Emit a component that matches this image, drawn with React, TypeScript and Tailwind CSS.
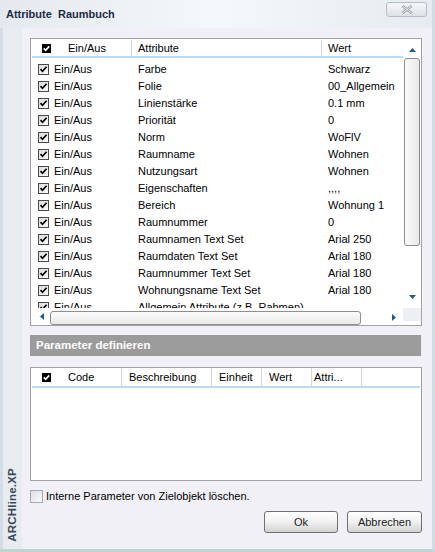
import { ReactNode } from 'react'

const rows = [
  ['Farbe', 'Schwarz'],
  ['Folie', '00_Allgemein'],
  ['Linienstärke', '0.1 mm'],
  ['Priorität', '0'],
  ['Norm', 'WoFlV'],
  ['Raumname', 'Wohnen'],
  ['Nutzungsart', 'Wohnen'],
  ['Eigenschaften', ',,,,'],
  ['Bereich', 'Wohnung 1'],
  ['Raumnummer', '0'],
  ['Raumnamen Text Set', 'Arial 250'],
  ['Raumdaten Text Set', 'Arial 180'],
  ['Raumnummer Text Set', 'Arial 180'],
  ['Wohnungsname Text Set', 'Arial 180'],
  ['Allgemein Attribute (z.B. Rahmen)', ''],
]

const RowCheck = () => (
  <svg width="11" height="11" viewBox="0 0 11 11" className="shrink-0">
    <defs>
      <linearGradient id="cb" x1="0" y1="0" x2="1" y2="1">
        <stop offset="0" stopColor="#d9d9d9" />
        <stop offset="1" stopColor="#ffffff" />
      </linearGradient>
    </defs>
    <rect x="0.5" y="0.5" width="10" height="10" fill="url(#cb)" stroke="#4a4a4a" />
    <path d="M2.5 5.2 L4.5 7.3 L8.6 2.8" fill="none" stroke="#000" strokeWidth="1.7" />
  </svg>
)

const HeadCheck = () => (
  <svg width="9" height="9" viewBox="0 0 9 9" className="shrink-0">
    <rect x="0" y="0" width="9" height="9" fill="#000" />
    <path d="M1.8 4.4 L3.7 6.4 L7.2 2.4" fill="none" stroke="#fff" strokeWidth="1.6" />
  </svg>
)

const Tri = ({ dir }: { dir: 'up' | 'down' | 'left' | 'right' }) => {
  const d = {
    up: 'M0 4 L3.5 0 L7 4 Z',
    down: 'M0 0 L7 0 L3.5 4 Z',
    left: 'M4 0 L4 7 L0 3.5 Z',
    right: 'M0 0 L4 3.5 L0 7 Z',
  }[dir]
  const vert = dir === 'up' || dir === 'down'
  return (
    <svg width={vert ? 7 : 4} height={vert ? 4 : 7} viewBox={vert ? '0 0 7 4' : '0 0 4 7'}>
      <path d={d} fill="#1f5a8e" />
    </svg>
  )
}

const HeadCell = ({ w, pl, children, last }: { w: string; pl: string; children?: ReactNode; last?: boolean }) => (
  <div className={`${w} ${pl} h-full flex items-center gap-[17px] ${last ? '' : 'border-r border-[#d6d6d6]'}`}>
    {children}
  </div>
)

export default function App() {
  return (
    <div className="w-[435px] h-[552px] flex flex-col bg-[#f0f0f6] font-['Liberation_Sans',Arial,sans-serif] text-[11px] text-black overflow-hidden border-r-[3px] border-b-[3px] border-r-[#d3dbe3] border-b-[#bcd5d1]">
      {/* Title bar */}
      <div className="h-[28px] shrink-0 flex items-center justify-between pl-[6px] pr-[5px] bg-gradient-to-r from-[#e3e9ee] via-[#f5f8fa] to-[#e5ebef]">
        <span className="font-bold text-[#1d2c45] whitespace-pre">Attribute  Raumbuch</span>
        <div className="w-[41px] h-[15px] mb-[9px] rounded-[3px] border border-[#b7bcc2] bg-gradient-to-b from-[#f6f7f8] to-[#dde1e5] flex items-center justify-center">
          <svg width="12" height="9" viewBox="0 0 12 9">
            <path d="M1.5 1 L10.5 8 M10.5 1 L1.5 8" stroke="#9aa0a6" strokeWidth="2.6" />
            <path d="M1.5 1 L10.5 8 M10.5 1 L1.5 8" stroke="#eef0f2" strokeWidth="1" />
          </svg>
        </div>
      </div>

      <div className="flex flex-1 min-h-0">
        {/* left brand strip */}
        <div className="w-[22px] shrink-0 border-l-[3px] border-[#d2dde7] bg-[#e8ecf1] flex flex-col justify-end items-center pb-[7px]">
          <span className="[writing-mode:vertical-rl] rotate-180 font-bold text-[11.5px] text-[#3b4a5a] tracking-[0.2px]">
            ARCHline.XP
          </span>
        </div>

        <div className="flex-1 flex flex-col pl-[8px] pr-[10px] pt-[10px]">
          {/* Attribute list */}
          <div className="h-[288px] border border-[#a3a3a3] bg-white flex flex-col">
            <div className="flex flex-1 min-h-0">
              <div className="w-[372px] flex flex-col">
                <div className="h-[19px] shrink-0 flex items-stretch pl-[1px] pt-[1px]">
                  <div className="flex w-full border-b-2 border-[#bcd9ef]">
                    <HeadCell w="w-[100px]" pl="pl-[10px]">
                      <HeadCheck />
                      <span>Ein/Aus</span>
                    </HeadCell>
                    <HeadCell w="w-[190px]" pl="pl-[6px]">
                      <span>Attribute</span>
                    </HeadCell>
                    <HeadCell w="flex-1" pl="pl-[6px]" last>
                      <span>Wert</span>
                    </HeadCell>
                  </div>
                </div>
                <div className="flex-1 overflow-hidden pt-[3px]">
                  {rows.map(([attr, val]) => (
                    <div key={attr} className="h-[17px] flex items-center whitespace-nowrap">
                      <div className="w-[107px] pl-[7px] flex items-center gap-[5px]">
                        <RowCheck />
                        <span>Ein/Aus</span>
                      </div>
                      <div className="w-[190px]">{attr}</div>
                      <div className="flex-1">{val}</div>
                    </div>
                  ))}
                </div>
              </div>
              {/* vertical scrollbar */}
              <div className="flex-1 flex flex-col">
                <div className="h-[19px] flex items-center justify-center pt-[3px]">
                  <Tri dir="up" />
                </div>
                <div className="h-[188px] mx-[1px] rounded-[3px] border border-[#8e8e8e] bg-gradient-to-r from-[#fbfbfb] to-[#e9e9e9]" />
                <div className="flex-1" />
                <div className="h-[17px] flex items-center justify-center pb-[6px]">
                  <Tri dir="down" />
                </div>
              </div>
            </div>
            {/* horizontal scrollbar */}
            <div className="h-[17px] shrink-0 flex">
              <div className="w-[372px] flex items-center">
                <div className="w-[19px] flex items-center justify-center pl-[3px]">
                  <Tri dir="left" />
                </div>
                <div className="w-[311px] h-[14px] mt-[2px] rounded-[3px] border border-[#8e8e8e] bg-gradient-to-b from-[#fbfbfb] to-[#e9e9e9]" />
                <div className="flex-1 flex items-center justify-end pr-[7px] pt-[2px]">
                  <Tri dir="right" />
                </div>
              </div>
              <div className="flex-1 h-[13px] bg-[#eeeff4]" />
            </div>
          </div>

          {/* Section bar */}
          <div className="mt-[9px] h-[21px] bg-[#9b9b9b] flex items-center pl-[6px] text-white font-bold text-[11.5px] border-r border-[#e8e8ee]">
            Parameter definieren
          </div>

          {/* Parameter list */}
          <div className="mt-[11px] h-[114px] border border-[#a3a3a3] bg-white flex flex-col">
            <div className="h-[20px] shrink-0 pl-[1px] pr-[1px]">
              <div className="flex h-full border-b-2 border-[#bcd9ef]">
                <HeadCell w="w-[90px]" pl="pl-[10px]">
                  <HeadCheck />
                  <span>Code</span>
                </HeadCell>
                <HeadCell w="w-[90px]" pl="pl-[7px]">
                  <span>Beschreibung</span>
                </HeadCell>
                <HeadCell w="w-[50px]" pl="pl-[7px]">
                  <span>Einheit</span>
                </HeadCell>
                <HeadCell w="w-[50px]" pl="pl-[7px]">
                  <span>Wert</span>
                </HeadCell>
                <HeadCell w="w-[50px]" pl="pl-[2px]">
                  <span>Attri...</span>
                </HeadCell>
                <div className="flex-1" />
              </div>
            </div>
            <div className="flex-1" />
          </div>

          {/* option */}
          <label className="mt-[9px] h-[13px] flex items-center gap-[3px]">
            <span className="w-[13px] h-[13px] border border-[#a5aab0] bg-gradient-to-br from-[#dcdee2] to-[#fafafa]" />
            <span>Interne Parameter von Zielobjekt löschen.</span>
          </label>

          {/* buttons */}
          <div className="mt-[8px] flex justify-end gap-[9px]">
            <button className="w-[74px] h-[22px] rounded-[3px] border border-[#707070] bg-gradient-to-b from-[#ffffff] via-[#f1f1f1] to-[#d2d2d2] text-[#1a1a1a]">
              Ok
            </button>
            <button className="w-[75px] h-[22px] rounded-[3px] border border-[#707070] bg-gradient-to-b from-[#ffffff] via-[#f1f1f1] to-[#d2d2d2] text-[#1a1a1a]">
              Abbrechen
            </button>
          </div>
        </div>
      </div>
    </div>
  )
}
